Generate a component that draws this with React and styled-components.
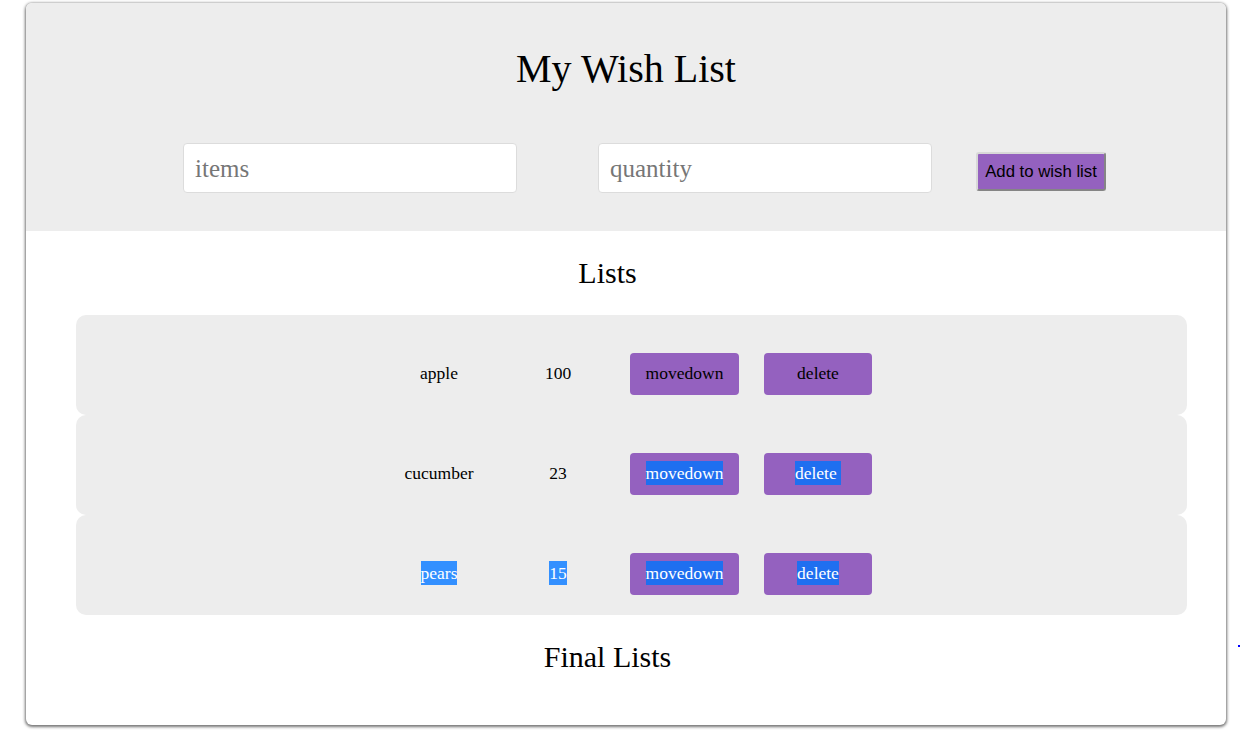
import React from 'react';
import styled, { createGlobalStyle } from 'styled-components';

const GlobalStyle = createGlobalStyle`
  body {
    margin: 0;
    background: #fff;
    font-family: "Liberation Serif", "Times New Roman", serif;
  }
`;

const Page = styled.div`
  position: relative;
  padding: 3px 15px 8px 26px;
`;

const Card = styled.main`
  width: 1200px;
  height: 722px;
  border-radius: 6px;
  overflow: hidden;
  background: #fff;
  box-shadow: 0 1px 3px 1px rgba(0, 0, 0, 0.55);
`;

const Header = styled.header`
  background: #ededed;
  height: 228px;
  display: flex;
  flex-direction: column;
`;

const Title = styled.h1`
  margin: 43px 0 0;
  text-align: center;
  font-weight: normal;
  font-size: 40px;
  line-height: 46px;
  color: #000;
`;

const Form = styled.div`
  display: flex;
  align-items: center;
  margin-top: 51px;
  padding-left: 157px;
`;

const Field = styled.input`
  box-sizing: border-box;
  width: 334px;
  height: 50px;
  margin-right: ${p => p.$gap}px;
  border: 1px solid #dcdcdc;
  border-radius: 4px;
  background: #fff;
  padding: 2px 11px 0;
  font-family: "Liberation Serif", serif;
  font-size: 25px;
  outline: none;
  &::placeholder {
    color: #767676;
  }
`;

const AddButton = styled.button`
  box-sizing: border-box;
  width: 130px;
  height: 39px;
  margin-top: 7px;
  background: #9461bf;
  border: 2px solid;
  border-color: #d8d8d8 #858585 #858585 #d8d8d8;
  border-radius: 3px;
  font-family: "Liberation Sans", Arial, sans-serif;
  font-size: 16.75px;
  color: #000;
  padding: 0;
`;

const Section = styled.section`
  padding: 25px 39px 0 50px;
`;

const Heading = styled.h2`
  margin: ${p => p.$before}px 0 ${p => p.$after}px;
  padding-right: ${p => p.$shift}px;
  text-align: center;
  font-weight: normal;
  font-size: 30px;
  line-height: 34px;
  color: #000;
`;

const Row = styled.div`
  box-sizing: border-box;
  height: 100px;
  padding: 18px 2px 0 0;
  border-radius: 10px;
  background: #ededed;
  display: flex;
  align-items: center;
  justify-content: center;
  font-size: 17.5px;
`;

const Cell = styled.span`
  width: 100px;
  text-align: center;
  margin: 0 ${p => p.$gap}px 2px 0;
`;

const RowButton = styled.button`
  width: ${p => p.$w}px;
  height: 42px;
  margin-right: ${p => p.$gap || 0}px;
  border: none;
  border-radius: 4px;
  background: #9461bf;
  font-family: "Liberation Serif", serif;
  font-size: 17.5px;
  color: #000;
  padding: 0 0 1px;
`;

const Sel = styled.span`
  background: ${p => (p.$deep ? '#1f6ff0' : '#3390ff')};
  color: #fff;
  padding: 2px 0;
`;

const Dot = styled.span`
  position: absolute;
  left: 1238px;
  top: 645px;
  width: 2px;
  height: 2px;
  background: #0000ff;
`;

const items = [
  { name: 'apple', qty: 100, sel: 0 },
  { name: 'cucumber', qty: 23, sel: 1 },
  { name: 'pears', qty: 15, sel: 2 },
];

const App = () => {
  return (
    <Page>
      <GlobalStyle />
      <Card>
        <Header>
          <Title>My Wish List</Title>
          <Form>
            <Field placeholder="items" $gap={81} />
            <Field placeholder="quantity" $gap={44} />
            <AddButton>Add to wish list</AddButton>
          </Form>
        </Header>
        <Section>
          <Heading $before={0} $after={25} $shift={48}>Lists</Heading>
          {items.map(it => (
            <Row key={it.name}>
              <Cell $gap={19}>{it.sel === 2 ? <Sel>{it.name}</Sel> : it.name}</Cell>
              <Cell $gap={22}>{it.sel === 2 ? <Sel>{it.qty}</Sel> : it.qty}</Cell>
              <RowButton $w={109} $gap={25}>
                {it.sel ? <Sel $deep>movedown</Sel> : 'movedown'}
              </RowButton>
              <RowButton $w={108}>
                {it.sel ? <Sel $deep>delete{it.sel === 1 ? '\u00a0' : ''}</Sel> : 'delete'}
              </RowButton>
            </Row>
          ))}
          <Heading $before={25} $after={0} $shift={48}>Final Lists</Heading>
        </Section>
      </Card>
      <Dot />
    </Page>
  );
};

export default App;
